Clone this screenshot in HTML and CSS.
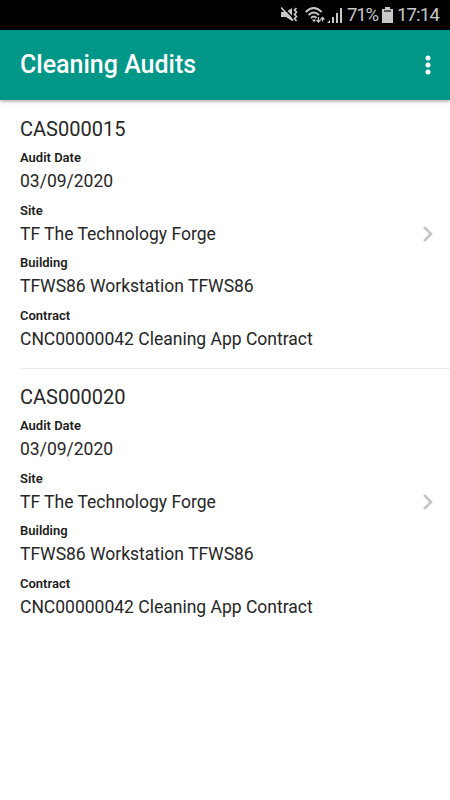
FILE: index.html
```html
<!DOCTYPE html>
<html lang="en">
<head>
  <meta charset="UTF-8" />
  <meta name="viewport" content="width=device-width, initial-scale=1.0"/>
  <title>Cleaning Audits</title>
  <link rel="stylesheet" href="styles.css">
</head>
<body>
  <!-- Status bar -->
  <div class="status-bar">
    <svg class="mute" width="18" height="18" viewBox="0 0 18 18">
      <path d="M0 6h5l6-4v13l-6-4H0z" fill="#c8c8c8"/>
      <path d="M2 1l11 12" stroke="#000" stroke-width="1.500"/>
      <path d="M0 1.500l12 13" stroke="#c8c8c8" stroke-width="1.800"/>
      <path d="M15.500 2l-2 2 2 2-2 2.500 2 2-2 2 2 2.500" stroke="#c8c8c8" stroke-width="1.700" fill="none"/>
    </svg>
    <svg class="wifi" width="20" height="18" viewBox="0 0 20 18">
      <path d="M.7 6q8-8 16 0M3.500 9q5.200-5 10.500 0M6 12q2.800-3 5.600 0" stroke="#c8c8c8" stroke-width="1.900" fill="none"/>
      <path d="M7 13.500h4l-2 3z" fill="#c8c8c8"/>
      <path d="M13.500 11v5M11.500 14l2 2 2-2M17.500 15.500v-4M15.500 13.500l2-2 2 2" stroke="#c8c8c8" stroke-width="1.300" fill="none"/>
    </svg>
    <svg class="signal" width="16" height="18" viewBox="0 0 16 18">
      <path d="M0 17l3-3v3zM5 11h2v6h-2zM9 7h2v10h-2zM13 2h2v15h-2z" fill="#c8c8c8"/>
    </svg>
    <span class="percent">71%</span>
    <svg class="battery" width="11" height="18" viewBox="0 0 11 18">
      <path d="M3 1h5v2h3v14H0V3h3z" fill="#c8c8c8"/>
      <path d="M2 5h7" stroke="#555" stroke-width="2"/>
    </svg>
    <span class="clock">17:14</span>
  </div>

  <header class="toolbar">
    <h1>Cleaning Audits</h1>
    <svg class="menu" width="6" height="20" viewBox="0 0 6 20" fill="#fff">
      <circle cx="3" cy="3" r="2.500"/>
      <circle cx="3" cy="10" r="2.500"/>
      <circle cx="3" cy="17" r="2.500"/>
    </svg>
  </header>

  <main id="audits"></main>

  <script>
    const audits = [
      { code: "CAS000015", date: "03/09/2020" },
      { code: "CAS000020", date: "03/09/2020" }
    ];

    const list = document.getElementById("audits");

    audits.forEach(({ code, date }) => {
      const item = document.createElement("section");
      item.className = "audit";
      item.innerHTML = `
        <div class="audit-details">
          <h2>${code}</h2>
          <dl>
            <dt>Audit Date</dt><dd>${date}</dd>
            <dt>Site</dt><dd>TF The Technology Forge</dd>
            <dt>Building</dt><dd>TFWS86 Workstation TFWS86</dd>
            <dt>Contract</dt><dd>CNC00000042 Cleaning App Contract</dd>
          </dl>
        </div>
        <svg class="chevron" width="12" height="18" viewBox="0 0 12 18">
          <path d="M2 2l7 7-7 7" fill="none" stroke="#c4c4c4" stroke-width="2.600"/>
        </svg>
      `;
      list.appendChild(item);
    });
  </script>
</body>
</html>
```

FILE: styles.css
```css
body {
  margin: 0;
  background: #fff;
  color: #262626;
  font-family: Roboto, sans-serif;
}
.status-bar {
  display: flex;
  align-items: center;
  justify-content: flex-end;
  height: 30px;
  padding-right: 11px;
  background: #000;
  color: #c8c8c8;
  font-size: 18.5px;
  letter-spacing: -0.8px;
}
.mute {
  margin-right: 6px;
}
.wifi {
  margin-right: 2px;
}
.signal {
  margin-right: 4px;
}
.percent {
  margin-right: 1px;
  letter-spacing: -1.1px;
}
.battery {
  margin: 0 4px 0 3px;
}
.toolbar {
  display: flex;
  align-items: center;
  justify-content: space-between;
  height: 70px;
  padding: 0 19px 0 20px;
  background: #009688;
  box-shadow: 0 1px 4px rgba(0, 0, 0, 0.4);
}
.toolbar h1 {
  margin: 0 0 2px;
  color: #fff;
  font-size: 25px;
  font-weight: 500;
}
.audit {
  display: flex;
  align-items: flex-start;
  justify-content: space-between;
  box-sizing: border-box;
  height: 269px;
  margin-left: 20px;
  padding: 16px 16px 0 0;
  border-bottom: 1px solid #ebebeb;
}
.audit + .audit {
  padding-top: 15px;
  border-bottom: 0;
}
.audit h2 {
  margin: 0;
  font-size: 20px;
  font-weight: 400;
  line-height: 27px;
}
.audit dl {
  margin: -1px 0 0;
}
.audit dt {
  padding-top: 5px;
  color: #1c1c1c;
  font-size: 13px;
  font-weight: 600;
  line-height: 22px;
}
.audit dd {
  margin: 0;
  font-size: 17.5px;
  font-weight: 400;
  line-height: 25.5px;
}
.chevron {
  margin-top: 109px;
}
```
